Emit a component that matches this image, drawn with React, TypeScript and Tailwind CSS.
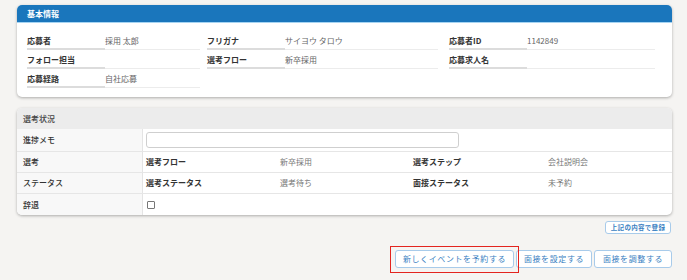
const font = { fontFamily: '"Noto Sans CJK JP", "Noto Sans", sans-serif' };

type Cell = { label: string; value?: string } | null;

const basicRows: Cell[][] = [
  [
    { label: "応募者", value: "採用 太郎" },
    { label: "フリガナ", value: "サイヨウ タロウ" },
    { label: "応募者ID", value: "1142849" },
  ],
  [
    { label: "フォロー担当", value: "" },
    { label: "選考フロー", value: "新卒採用" },
    { label: "応募求人名", value: "" },
  ],
  [{ label: "応募経路", value: "自社応募" }, null, null],
];

const colWidths = ["w-[173px]", "w-[231px]", "w-[206px]"];

const InfoCell = ({ cell, width }: { cell: Cell; width: string }) => {
  if (!cell) return <div className={`${width} h-[19px]`} />;
  return (
    <div className={`${width} h-[19px] flex`}>
      <div className="w-[78px] border-b-2 border-[#dcdcdc] flex items-center text-[8px] font-bold text-[#333] pt-[2px]">
        {cell.label}
      </div>
      <div className="flex-1 border-b border-[#ececec] flex items-center text-[8px] text-[#666] pt-[2px]">
        {cell.value}
      </div>
    </div>
  );
};

const BasicInfo = () => (
  <div className="bg-white rounded-[5px] shadow-[0_1px_3px_rgba(0,0,0,0.3)] overflow-hidden">
    <div className="h-[18px] bg-[#1a76bc] border-b border-[#a6d4f2] flex items-center px-[10px] text-[8px] font-bold text-white">
      基本情報
    </div>
    <div className="pt-[8px] pb-[9px] pl-[10px]">
      {basicRows.map((row, i) => (
        <div key={i} className="flex">
          <InfoCell cell={row[0]} width={colWidths[0]} />
          <div className="w-[7px]" />
          <InfoCell cell={row[1]} width={colWidths[1]} />
          <div className="w-[11px]" />
          <InfoCell cell={row[2]} width={colWidths[2]} />
        </div>
      ))}
    </div>
  </div>
);

const Label = ({ children }: { children: React.ReactNode }) => (
  <div className="w-[126px] shrink-0 bg-[#f8f8f8] border-r border-[#e4e4e4] flex items-center pl-[6px] text-[8px] font-medium text-[#333]">
    {children}
  </div>
);

const SelectionStatus = () => (
  <div className="bg-white rounded-[5px] shadow-[0_1px_3px_rgba(0,0,0,0.3)] overflow-hidden">
    <div className="h-[21px] bg-[#ececec] flex items-center pl-[6px] text-[8px] font-medium text-[#444]">選考状況</div>
    <div className="flex h-[23px] border-b border-[#e6e6e6]">
      <Label>進捗メモ</Label>
      <div className="flex items-center pl-[3px]">
        <div className="w-[313px] h-[16px] border border-[#cfcfcf] rounded-[3px] bg-white" />
      </div>
    </div>
    <div className="flex h-[21px] border-b border-[#e6e6e6]">
      <Label>選考</Label>
      <div className="flex items-center pl-[3px] text-[8px]">
        <div className="w-[134px] font-bold text-[#333]">選考フロー</div>
        <div className="w-[133px] text-[#777]">新卒採用</div>
        <div className="w-[135px] font-bold text-[#333]">選考ステップ</div>
        <div className="text-[#777]">会社説明会</div>
      </div>
    </div>
    <div className="flex h-[21px] border-b border-[#e6e6e6]">
      <Label>ステータス</Label>
      <div className="flex items-center pl-[3px] text-[8px]">
        <div className="w-[134px] font-bold text-[#333]">選考ステータス</div>
        <div className="w-[133px] text-[#777]">選考待ち</div>
        <div className="w-[135px] font-bold text-[#333]">面接ステータス</div>
        <div className="text-[#777]">未予約</div>
      </div>
    </div>
    <div className="flex h-[21px]">
      <Label>辞退</Label>
      <div className="flex items-center pl-[4px]">
        <div className="w-[8px] h-[8px] border border-[#777] rounded-[1px] bg-white" />
      </div>
    </div>
  </div>
);

const Btn = ({ children, w }: { children: React.ReactNode; w: string }) => (
  <button
    className={`${w} h-[18px] bg-white border border-[#a8cbea] rounded-[3px] text-[8px] text-[#3a7fc2] tracking-[0.6px] flex items-center justify-center`}
  >
    {children}
  </button>
);

export default function App() {
  return (
    <div className="w-[687px] h-[280px] bg-[#f5f4f2] pt-[5px] pl-[17px] pr-[15px] overflow-hidden" style={font}>
      <BasicInfo />
      <div className="h-[11px]" />
      <SelectionStatus />
      <div className="flex justify-end mt-[6px] pr-[1px]">
        <button className="w-[66px] h-[13px] bg-white border border-[#a8cbea] rounded-[3px] text-[6.5px] font-bold text-[#3a7fc2] tracking-[0.3px] flex items-center justify-center">
          上記の内容で登録
        </button>
      </div>
      <div className="flex justify-end gap-[2px] mt-[16px]">
        <div className="relative">
          <Btn w="w-[119px]">新しくイベントを予約する</Btn>
          <div className="absolute -left-[5px] -right-[5px] -top-[4px] -bottom-[5px] border-[1.5px] border-[#e3241f] pointer-events-none" />
        </div>
        <Btn w="w-[76px]">面接を設定する</Btn>
        <Btn w="w-[78px]">面接を調整する</Btn>
      </div>
    </div>
  );
}
